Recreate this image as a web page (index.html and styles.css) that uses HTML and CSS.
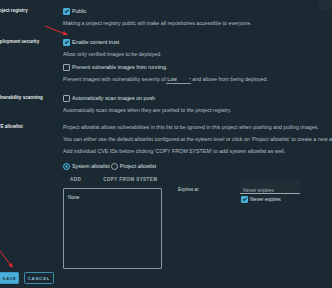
FILE: index.html
```html
<!DOCTYPE html>
<html lang="en">
<head>
  <meta charset="UTF-8">
  <meta name="viewport" content="width=device-width, initial-scale=1.0">
  <title>Project configuration</title>
  <link rel="stylesheet" href="styles.css">
</head>
<body>

  <!-- Red annotation arrows drawn over the page -->
  <svg class="arrows" width="332" height="288" viewBox="0 0 332 288">
    <line x1="45" y1="26" x2="64" y2="33.4" stroke="#e8262b" stroke-width="1"/>
    <polygon points="68,35 62.6,35.1 64,31.3" fill="#e8262b"/>
    <line x1="0" y1="251" x2="10.5" y2="264.8" stroke="#e8262b" stroke-width="1"/>
    <polygon points="13,268 8.4,265.2 11.6,262.8" fill="#e8262b"/>
  </svg>
  <div class="corner"></div>

  <form class="settings">
    <!-- Project registry -->
    <div class="row">
      <div class="label">Project registry</div>
      <div class="controls">
        <label class="check"><span class="box on"></span>Public</label>
        <p class="help">Making a project registry public will make all repositories accessible to everyone.</p>
      </div>
    </div>

    <!-- Deployment security -->
    <div class="row">
      <div class="label">Deployment security</div>
      <div class="controls">
        <label class="check"><span class="box on"></span>Enable content trust</label>
        <p class="help">Allow only verified images to be deployed.</p>
        <label class="check spaced"><span class="box"></span>Prevent vulnerable images from running.</label>
        <p class="help">Prevent images with vulnerability severity of <span class="select">Low<span class="chevron">&#8964;</span></span>and above from being deployed.</p>
      </div>
    </div>

    <!-- Vulnerability scanning -->
    <div class="row">
      <div class="label">Vulnerability scanning</div>
      <div class="controls">
        <label class="check"><span class="box"></span>Automatically scan images on push</label>
        <p class="help">Automatically scan images when they are pushed to the project registry.</p>
      </div>
    </div>

    <!-- CVE allowlist -->
    <div class="row cve">
      <div class="label">CVE allowlist</div>
      <div class="controls">
        <p class="help">Project allowlist allows vulnerabilities in this list to be ignored in this project when pushing and pulling images.</p>
        <p class="help">You can either use the default allowlist configured at the system level or click on 'Project allowlist' to create a new allowlist.</p>
        <p class="help">Add individual CVE IDs before clicking 'COPY FROM SYSTEM' to add system allowlist as well.</p>

        <div class="radios">
          <label class="radio"><span class="dot on"></span>System allowlist</label>
          <label class="radio"><span class="dot"></span>Project allowlist</label>
        </div>

        <div class="allowlist">
          <div class="list-col">
            <div class="tabs">
              <span class="tab add">ADD</span>
              <span class="tab">COPY FROM SYSTEM</span>
            </div>
            <div class="list-box">None</div>
          </div>
          <div class="expires">
            <div class="expires-label">Expires at</div>
            <div class="expires-field">
              <div class="date-field">Never expires</div>
              <label class="check small"><span class="box on"></span>Never expires</label>
            </div>
          </div>
        </div>
      </div>
    </div>

    <div class="actions">
      <button type="button" class="btn btn-primary">SAVE</button>
      <button type="button" class="btn btn-outline">CANCEL</button>
    </div>
  </form>

</body>
</html>
```

FILE: styles.css
```css
/* General Styles */
body {
  margin: 0;
  width: 332px;
  height: 288px;
  overflow: hidden;
  position: relative;
  background-color: #1b2a32;
  font-family: "Liberation Sans", Arial, sans-serif;
  font-size: 5.3px;
  color: #b3bfc5;
}

.arrows {
  position: absolute;
  top: 0;
  left: 0;
  pointer-events: none;
  z-index: 2;
}

.corner {
  position: absolute;
  top: 0;
  right: 0;
  width: 13px;
  height: 10px;
  background: #1f2e37;
}

/* Form layout */
.settings {
  margin-left: -6px;
  padding-top: 5px;
}

.row {
  display: grid;
  grid-template-columns: 69px 1fr;
  margin-top: 7px;
}

.row:first-child {
  margin-top: 0;
}

.row.cve {
  margin-top: 5px;
}

.label {
  font-size: 4.6px;
  font-weight: bold;
  line-height: 12px;
  color: #e3e8ea;
  white-space: nowrap;
}

.controls {
  min-width: 0;
  overflow: hidden;
}

.help {
  margin: 0;
  line-height: 12px;
  white-space: nowrap;
}

/* Checkboxes */
.check {
  display: flex;
  align-items: center;
  gap: 1px;
  height: 12px;
  color: #d9e0e3;
  white-space: nowrap;
}

.check.spaced {
  margin-top: 1px;
}

.box {
  position: relative;
  flex: none;
  width: 7px;
  height: 7px;
  box-sizing: border-box;
  border: 1px solid #9da9b0;
  border-radius: 1px;
  margin-right: 1px;
}

.box.on {
  background: #49afd9;
  border-color: #49afd9;
}

.box.on::after {
  content: "";
  position: absolute;
  left: 1.4px;
  top: 1.2px;
  width: 2.6px;
  height: 1.3px;
  border-left: 1px solid #1b2a32;
  border-bottom: 1px solid #1b2a32;
  transform: rotate(-45deg);
}

/* Severity select */
.select {
  display: inline-flex;
  justify-content: space-between;
  width: 25px;
  margin: 0 1px 0 -1px;
  padding-left: 1px;
  box-sizing: border-box;
  border-bottom: 1px solid #8a979f;
  line-height: 7px;
  color: #c9d2d6;
}

.chevron {
  font-size: 4px;
  line-height: 4px;
}

/* Radios */
.radios {
  display: flex;
  gap: 1px;
  height: 12px;
  margin-top: 3px;
  align-items: center;
}

.radio {
  display: flex;
  align-items: center;
  gap: 2px;
  color: #d9e0e3;
}

.dot {
  width: 7px;
  height: 7px;
  box-sizing: border-box;
  border: 1px solid #9da9b0;
  border-radius: 50%;
}

.dot.on {
  border-color: #49afd9;
  background: #49afd9;
  box-shadow: inset 0 0 0 1.2px #1b2a32;
}

/* Allowlist */
.allowlist {
  display: flex;
  gap: 16px;
}

.tabs {
  display: flex;
  align-items: center;
  height: 14px;
  padding-left: 7px;
  gap: 22px;
  margin-bottom: 2px;
  font-size: 4.6px;
}

.tab {
  letter-spacing: 0.4px;
  font-weight: bold;
  color: #a2afb6;
}

.list-box {
  width: 99px;
  height: 81px;
  box-sizing: border-box;
  border: 1px solid #8a979f;
  border-radius: 1px;
  padding: 5px 4px;
  line-height: 8px;
  font-size: 4.8px;
  color: #d9e0e3;
}

.expires {
  display: flex;
}

.expires-label {
  width: 62px;
  margin-top: 14px;
  line-height: 8px;
  font-size: 4.6px;
  color: #d2d9dd;
}

.expires-field {
  width: 60px;
  padding-top: 7px;
  font-size: 5px;
}

.date-field {
  height: 15px;
  box-sizing: border-box;
  padding: 7px 0 0 3px;
  line-height: 8px;
  background: #202e36;
  border-bottom: 1px solid #9aa6ad;
  color: #a8b4ba;
}

.check.small {
  height: 8px;
  margin-top: 1px;
  padding-left: 1px;
}

/* Buttons */
.actions {
  display: flex;
  gap: 5px;
  margin-top: 3px;
}

.btn {
  height: 12px;
  padding: 0;
  box-sizing: border-box;
  border-radius: 1.5px;
  font-family: inherit;
  font-size: 4.4px;
  font-weight: bold;
  letter-spacing: 0.7px;
  cursor: pointer;
}

.btn-primary {
  width: 25px;
  background: #49afd9;
  border: 1px solid #3a9ac3;
  color: #1d3846;
  padding-left: 6px;
}

.btn-outline {
  width: 30px;
  background: transparent;
  border: 1px solid #3f8eb1;
  color: #86bdd5;
}
```
